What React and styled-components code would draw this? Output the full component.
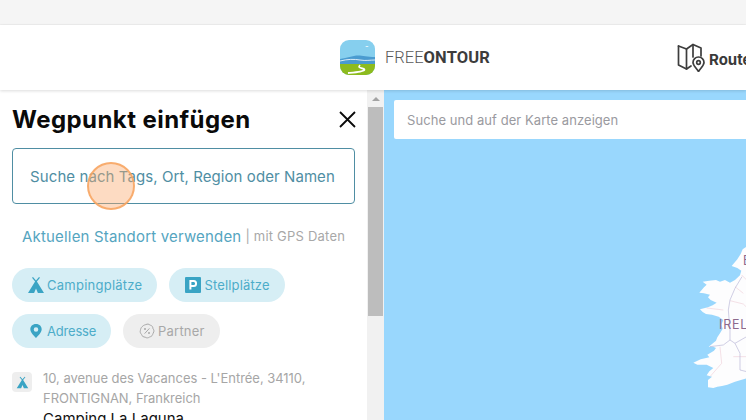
import React from 'react'
import styled, { createGlobalStyle } from 'styled-components'

const Global = createGlobalStyle`
  html, body { margin: 0; padding: 0; height: 100%; overflow: hidden; background: #fff; }
  body { font-family: Inter, "Liberation Sans", sans-serif; }
  * { box-sizing: border-box; }
`

const Page = styled.div`
  width: 746px;
  height: 420px;
  display: flex;
  flex-direction: column;
  overflow: hidden;
  position: relative;
`
const TopStrip = styled.div`
  height: 25px;
  flex: none;
  background: #f5f5f5;
  border-bottom: 1px solid #efefef;
`
const Header = styled.header`
  height: 65px;
  flex: none;
  background: #fff;
  display: flex;
  align-items: center;
  padding-left: 340px;
  position: relative;
  z-index: 2;
  box-shadow: 0 1px 3px rgba(0, 0, 0, 0.14);
  white-space: nowrap;
`
const Brand = styled.div`
  display: flex;
  align-items: center;
  gap: 10px;
  width: 337px;
  flex: none;
`
const Wordmark = styled.div`
  font-family: Roboto, sans-serif;
  font-size: 16.5px;
  letter-spacing: 0px;
  color: #5a5a5a;
  font-weight: 300;
  b { font-weight: 700; color: #3c3c3c; letter-spacing: 0.15px; }
`
const NavItem = styled.div`
  display: flex;
  align-items: center;
  gap: 3px;
  font-size: 15px;
  font-weight: 700;
  color: #3a3a3a;
  flex: none;
  span { margin-top: 4px; }
`
const Body = styled.div`
  flex: 1;
  display: flex;
  min-height: 0;
`
const Sidebar = styled.aside`
  width: 367px;
  flex: none;
  background: #fff;
  padding: 0 12px;
  overflow: hidden;
`
const TitleRow = styled.div`
  display: flex;
  align-items: center;
  justify-content: space-between;
  height: 58px;
  margin-right: -1px;
`
const Title = styled.h2`
  margin: 0;
  font-size: 24px;
  font-weight: 700;
  color: #0a0a0a;
  letter-spacing: 0.44px;
`
const SearchField = styled.div`
  height: 56px;
  border: 1px solid #4f8ea3;
  border-radius: 4px;
  display: flex;
  align-items: center;
  justify-content: center;
  font-size: 15px;
  letter-spacing: 0.08px;
  color: #4f8ea3;
  white-space: nowrap;
  padding-right: 2px;
`
const LocationRow = styled.div`
  margin-top: 22px;
  padding-left: 10px;
  height: 20px;
  display: flex;
  align-items: center;
  white-space: nowrap;
  font-size: 15px;
  letter-spacing: 0.18px;
  color: #55a5bf;
  span { margin-left: 4px; font-size: 13px; letter-spacing: 0.22px; color: #a8a8a8; }
`
const Chips = styled.div`
  margin-top: 22px;
  display: flex;
  flex-wrap: wrap;
  gap: 12px;
  width: 300px;
`
const Chip = styled.div`
  height: 34px;
  border-radius: 17px;
  padding: 0 15px;
  display: flex;
  align-items: center;
  gap: 2px;
  font-size: 13px;
  letter-spacing: ${props => props.$track || '0.25px'};
  white-space: nowrap;
  background: ${props => (props.$muted ? '#eeeeee' : '#d6eef5')};
  color: ${props => (props.$muted ? '#a8a8a8' : '#4dacc9')};
`
const ChipIcon = styled.span`
  width: 18px;
  height: 18px;
  flex: none;
  display: flex;
  align-items: center;
  justify-content: center;
`
const Result = styled.div`
  margin-top: 20px;
  display: flex;
  gap: 11px;
`
const ResultIcon = styled.div`
  width: 20px;
  height: 20px;
  margin-top: 4px;
  flex: none;
  border-radius: 4px;
  background: #eeeeee;
  display: flex;
  align-items: center;
  justify-content: center;
`
const Address = styled.div`
  font-size: 13px;
  line-height: 20px;
  letter-spacing: -0.03px;
  color: #a6a6a6;
`
const ResultName = styled.div`
  margin-top: 1px;
  font-size: 15px;
  line-height: 20px;
  color: #111;
`
const Scrollbar = styled.div`
  width: 17px;
  flex: none;
  background: #f1f1f1;
  display: flex;
  flex-direction: column;
  align-items: center;
`
const ScrollArrow = styled.div`
  height: 17px;
  flex: none;
  display: flex;
  align-items: center;
  justify-content: center;
  &::before {
    content: '';
    border-left: 4px solid transparent;
    border-right: 4px solid transparent;
    border-bottom: 4px solid #a3a3a3;
  }
`
const ScrollThumb = styled.div`
  width: 15px;
  height: 209px;
  flex: none;
  background: #bdbdbd;
`
const MapArea = styled.main`
  flex: 1;
  position: relative;
  background: #99d7fd;
  overflow: hidden;
`
const MapSearch = styled.div`
  position: absolute;
  left: 10px;
  top: 10px;
  width: 400px;
  height: 39px;
  background: #fff;
  border-radius: 2px;
  display: flex;
  align-items: center;
  padding-left: 13px;
  font-size: 13px;
  letter-spacing: 0.06px;
  color: #9a9aa0;
`
const MapDrawing = styled.svg`
  position: absolute;
  left: 0;
  top: 0;
`
const MapLabel = styled.text`
  font-family: Inter, sans-serif;
  font-size: 12.5px;
  letter-spacing: 0.8px;
  fill: #8d6a8d;
`
const TouchMark = styled.div`
  position: absolute;
  left: 87px;
  top: 162px;
  width: 48px;
  height: 48px;
  border-radius: 50%;
  background: rgba(250, 170, 110, 0.42);
  border: 2px solid rgba(248, 165, 95, 0.85);
  z-index: 5;
`

const Logo = () => (
  <svg width="35" height="35" viewBox="0 0 35 35">
    <defs>
      <clipPath id="logoClip">
        <rect width="35" height="35" rx="9" />
      </clipPath>
    </defs>
    <g clipPath="url(#logoClip)">
      <rect width="35" height="35" fill="#86cfee" />
      <path d="M0 19 C6 18 9 17 14 16 C20 14.5 25 17 35 17 V25 H0 Z" fill="#4a9bd0" />
      <path d="M0 21 C8 19 14 19 20 20 C26 21 30 20 35 20" stroke="#fff" strokeWidth="0.8" fill="none" />
      <rect y="24" width="35" height="11" fill="#8dbb1e" />
      <path d="M8 33 C13 32.5 27 31.5 24 29 C22 27.5 17 28.5 20 25" stroke="#fff" strokeWidth="1.8" fill="none" />
      <path d="M25 7 l2 -1 l2 0 l-2 1z" fill="#fff" />
    </g>
  </svg>
)

const RouteIcon = () => (
  <svg width="29" height="29" viewBox="0 0 29 29" fill="none" stroke="#3d3d3d" strokeWidth="1.7" strokeLinejoin="round" strokeLinecap="round">
    <path d="M1.5 3 L9.5 6 L16 1.5 L24 5 V13" />
    <path d="M1.5 3 V22 L9.5 26 L14 23" />
    <path d="M9.5 6 V26" />
    <path d="M16 1.5 V14" />
    <path d="M27 19.5 a5.5 5.5 0 0 0 -11 0 c0 3 3.5 5.5 5.5 9 c2 -3.5 5.5 -6 5.5 -9z" />
    <circle cx="21.5" cy="19.5" r="1.8" />
  </svg>
)

const TentIcon = ({ size = 18 }) => (
  <svg width={size} height={size} viewBox="0 0 18 18" fill="#3aa4c4">
    <path d="M6 1 L9 4.6 L12 1 L13 1.8 L9.9 5.6 L17 17 H10.9 L9 12.5 L7.1 17 H1 L8.1 5.6 L5 1.8 Z" />
  </svg>
)

const ParkingIcon = () => (
  <svg width="16" height="16" viewBox="0 0 16 16">
    <rect width="16" height="16" rx="1" fill="#3aa4c4" />
    <path d="M5.4 12.5 V4 H8.8 C11.8 4 11.8 9 8.8 9 H5.4" fill="none" stroke="#fff" strokeWidth="2" />
  </svg>
)

const PinIcon = () => (
  <svg width="14" height="16" viewBox="0 0 16 17">
    <path fillRule="evenodd" fill="#3aa4c4" d="M8 0.5 C3.8 0.5 1.5 3.4 1.5 6.6 C1.5 10.4 6 14.6 8 16.5 C10 14.6 14.5 10.4 14.5 6.6 C14.5 3.4 12.2 0.5 8 0.5Z M8 4.2 a2.6 2.6 0 1 1 0 5.2 a2.6 2.6 0 1 1 0 -5.2Z" />
  </svg>
)

const PartnerIcon = () => (
  <svg width="16" height="16" viewBox="0 0 16 16" fill="none" stroke="#a8a8a8" strokeWidth="1">
    <path d="M8 1.2 C9.5 0.6 10.6 2 11.6 2.3 C13 2.7 14 3.8 13.8 5.2 C14.6 6.6 15.2 7.2 14.8 8.8 C14.4 10 13.8 10.6 13.6 11.6 C13 13.4 11.6 13.6 10.6 14 C9.2 15 7.6 15.2 6.2 14.2 C4.6 14 3 13.4 2.6 11.6 C1.6 10.4 0.8 9.2 1.4 7.4 C1.6 6 2 4.6 3.2 3.6 C4.6 2 6.4 1.8 8 1.2Z" />
    <path d="M10.4 5.4 L5.6 10.6" />
    <circle cx="6" cy="6" r="1" fill="#a8a8a8" stroke="none" />
    <circle cx="10" cy="10" r="1" fill="#a8a8a8" stroke="none" />
  </svg>
)

const CloseIcon = () => (
  <svg width="18" height="18" viewBox="0 0 18 18" stroke="#0a0a0a" strokeWidth="1.8">
    <path d="M2 2 L17 17 M17 2 L2 17" />
  </svg>
)

// Ireland, traced at 3x and scaled back down
const MapShapes = () => (
  <MapDrawing width="362" height="330" viewBox="0 0 362 330">
    <g transform="translate(296 140) scale(0.3333)">
      <path
        fill="#fdfdfe"
        d="M200 50 L188 58 L182 72 L172 88 L155 108 L172 114 L184 122 L180 136 L165 150 L150 158 L135 150 L120 155 L108 150 L88 152 L68 155 L80 164 L72 172 L58 188 L72 190 L90 194 L84 202 L92 210 L110 218 L98 226 L84 232 L60 238 L68 246 L78 252 L96 254 L116 260 L130 270 L124 284 L128 296 L120 310 L112 322 L108 332 L86 350 L100 350 L108 354 L102 362 L82 374 L88 382 L62 388 L40 398 L52 404 L80 404 L100 414 L88 424 L80 436 L96 440 L84 450 L84 472 L100 474 L112 470 L126 468 L142 464 L165 455 L200 445 Z"
      />
      <g fill="none" strokeWidth="2" opacity="0.8">
        <path stroke="#efc9d3" d="M150 212 L190 222 L200 232 M80 234 L130 240 M120 350 L125 400 L90 440 M160 380 L200 380 M165 170 L190 190 M185 135 L200 150" />
        <path stroke="#a9a6cf" d="M186 140 L165 175 L150 210 L145 240 L150 300 L150 330 L130 345 L90 350 M150 330 L165 340 L180 370 L180 420 L200 425 M165 340 L200 320" />
      </g>
    </g>
    <MapLabel x="335" y="239">IRELAND</MapLabel>
    <MapLabel x="359" y="175">B</MapLabel>
  </MapDrawing>
)

const App = () => {
  return (
    <Page>
      <Global />
      <TopStrip />
      <Header>
        <Brand>
          <Logo />
          <Wordmark>FREE<b>ONTOUR</b></Wordmark>
        </Brand>
        <NavItem>
          <RouteIcon />
          <span>Routen</span>
        </NavItem>
      </Header>
      <Body>
        <Sidebar>
          <TitleRow>
            <Title>Wegpunkt einfügen</Title>
            <CloseIcon />
          </TitleRow>
          <SearchField>Suche nach Tags, Ort, Region oder Namen</SearchField>
          <LocationRow>
            Aktuellen Standort verwenden <span>| mit GPS Daten</span>
          </LocationRow>
          <Chips>
            <Chip><ChipIcon><TentIcon /></ChipIcon>Campingplätze</Chip>
            <Chip $track="0.15px"><ChipIcon><ParkingIcon /></ChipIcon>Stellplätze</Chip>
            <Chip $track="-0.2px"><ChipIcon><PinIcon /></ChipIcon>Adresse</Chip>
            <Chip $muted $track="0.2px"><ChipIcon><PartnerIcon /></ChipIcon>Partner</Chip>
          </Chips>
          <Result>
            <ResultIcon><TentIcon size={13} /></ResultIcon>
            <div>
              <Address>10, avenue des Vacances - L'Entrée, 34110, FRONTIGNAN, Frankreich</Address>
              <ResultName>Camping La Laguna</ResultName>
            </div>
          </Result>
        </Sidebar>
        <Scrollbar>
          <ScrollArrow />
          <ScrollThumb />
        </Scrollbar>
        <MapArea>
          <MapShapes />
          <MapSearch>Suche und auf der Karte anzeigen</MapSearch>
        </MapArea>
      </Body>
      <TouchMark />
    </Page>
  )
}

export default App
